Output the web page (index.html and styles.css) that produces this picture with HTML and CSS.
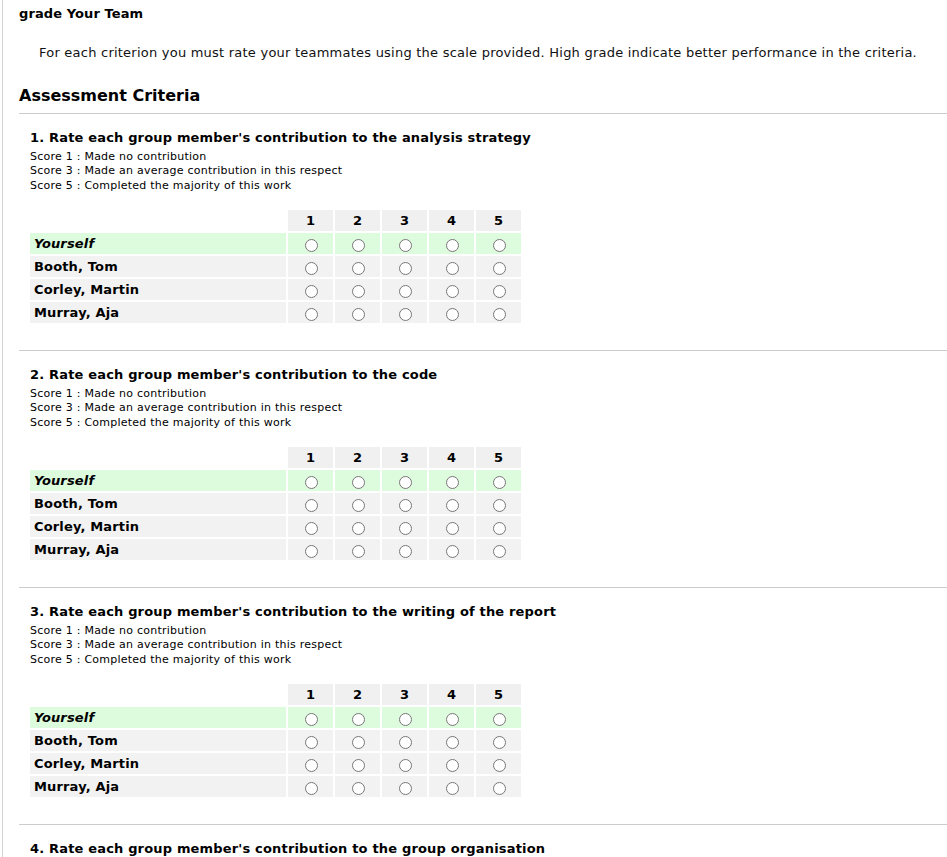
FILE: index.html
```html
<!DOCTYPE html>
<html lang="en">
<head>
<meta charset="utf-8">
<title>grade Your Team</title>
<link rel="stylesheet" href="styles.css">
</head>
<body>
<div class="page">
  <div class="page-title">grade Your Team</div>
  <p class="intro">For each criterion you must rate your teammates using the scale provided. High grade indicate better performance in the criteria.</p>
  <h2 class="section-heading">Assessment Criteria</h2>

  <div class="criterion">
    <div class="crit-title">1. Rate each group member's contribution to the analysis strategy</div>
    <div class="scores">
      <div>Score 1 : Made no contribution</div>
      <div>Score 3 : Made an average contribution in this respect</div>
      <div>Score 5 : Completed the majority of this work</div>
    </div>
    <table class="grid">
      <tr class="head"><td class="blank"></td><th>1</th><th>2</th><th>3</th><th>4</th><th>5</th></tr>
      <tr class="self"><td class="name"><i>Yourself</i></td><td><input type="radio" name="c1m0"></td><td><input type="radio" name="c1m0"></td><td><input type="radio" name="c1m0"></td><td><input type="radio" name="c1m0"></td><td><input type="radio" name="c1m0"></td></tr>
      <tr><td class="name">Booth, Tom</td><td><input type="radio" name="c1m1"></td><td><input type="radio" name="c1m1"></td><td><input type="radio" name="c1m1"></td><td><input type="radio" name="c1m1"></td><td><input type="radio" name="c1m1"></td></tr>
      <tr><td class="name">Corley, Martin</td><td><input type="radio" name="c1m2"></td><td><input type="radio" name="c1m2"></td><td><input type="radio" name="c1m2"></td><td><input type="radio" name="c1m2"></td><td><input type="radio" name="c1m2"></td></tr>
      <tr><td class="name">Murray, Aja</td><td><input type="radio" name="c1m3"></td><td><input type="radio" name="c1m3"></td><td><input type="radio" name="c1m3"></td><td><input type="radio" name="c1m3"></td><td><input type="radio" name="c1m3"></td></tr>
    </table>
  </div>

  <div class="criterion">
    <div class="crit-title">2. Rate each group member's contribution to the code</div>
    <div class="scores">
      <div>Score 1 : Made no contribution</div>
      <div>Score 3 : Made an average contribution in this respect</div>
      <div>Score 5 : Completed the majority of this work</div>
    </div>
    <table class="grid">
      <tr class="head"><td class="blank"></td><th>1</th><th>2</th><th>3</th><th>4</th><th>5</th></tr>
      <tr class="self"><td class="name"><i>Yourself</i></td><td><input type="radio" name="c2m0"></td><td><input type="radio" name="c2m0"></td><td><input type="radio" name="c2m0"></td><td><input type="radio" name="c2m0"></td><td><input type="radio" name="c2m0"></td></tr>
      <tr><td class="name">Booth, Tom</td><td><input type="radio" name="c2m1"></td><td><input type="radio" name="c2m1"></td><td><input type="radio" name="c2m1"></td><td><input type="radio" name="c2m1"></td><td><input type="radio" name="c2m1"></td></tr>
      <tr><td class="name">Corley, Martin</td><td><input type="radio" name="c2m2"></td><td><input type="radio" name="c2m2"></td><td><input type="radio" name="c2m2"></td><td><input type="radio" name="c2m2"></td><td><input type="radio" name="c2m2"></td></tr>
      <tr><td class="name">Murray, Aja</td><td><input type="radio" name="c2m3"></td><td><input type="radio" name="c2m3"></td><td><input type="radio" name="c2m3"></td><td><input type="radio" name="c2m3"></td><td><input type="radio" name="c2m3"></td></tr>
    </table>
  </div>

  <div class="criterion">
    <div class="crit-title">3. Rate each group member's contribution to the writing of the report</div>
    <div class="scores">
      <div>Score 1 : Made no contribution</div>
      <div>Score 3 : Made an average contribution in this respect</div>
      <div>Score 5 : Completed the majority of this work</div>
    </div>
    <table class="grid">
      <tr class="head"><td class="blank"></td><th>1</th><th>2</th><th>3</th><th>4</th><th>5</th></tr>
      <tr class="self"><td class="name"><i>Yourself</i></td><td><input type="radio" name="c3m0"></td><td><input type="radio" name="c3m0"></td><td><input type="radio" name="c3m0"></td><td><input type="radio" name="c3m0"></td><td><input type="radio" name="c3m0"></td></tr>
      <tr><td class="name">Booth, Tom</td><td><input type="radio" name="c3m1"></td><td><input type="radio" name="c3m1"></td><td><input type="radio" name="c3m1"></td><td><input type="radio" name="c3m1"></td><td><input type="radio" name="c3m1"></td></tr>
      <tr><td class="name">Corley, Martin</td><td><input type="radio" name="c3m2"></td><td><input type="radio" name="c3m2"></td><td><input type="radio" name="c3m2"></td><td><input type="radio" name="c3m2"></td><td><input type="radio" name="c3m2"></td></tr>
      <tr><td class="name">Murray, Aja</td><td><input type="radio" name="c3m3"></td><td><input type="radio" name="c3m3"></td><td><input type="radio" name="c3m3"></td><td><input type="radio" name="c3m3"></td><td><input type="radio" name="c3m3"></td></tr>
    </table>
  </div>

  <div class="criterion">
    <div class="crit-title">4. Rate each group member's contribution to the group organisation</div>
    <div class="scores">
      <div>Score 1 : Made no contribution</div>
      <div>Score 3 : Made an average contribution in this respect</div>
      <div>Score 5 : Completed the majority of this work</div>
    </div>
  </div>
</div>
</body>
</html>
```

FILE: styles.css
```css
html, body {
  margin: 0;
  padding: 0;
  background: #ffffff;
}
body {
  font-family: "DejaVu Sans", Verdana, sans-serif;
  color: #000;
  overflow: hidden;
}
.page {
  margin-left: 2px;
  border-left: 1px solid #d4d4d4;
  padding-left: 16px;
  min-height: 900px;
}
.page-title {
  font-size: 13px;
  font-weight: bold;
  line-height: 16px;
  padding-top: 6px;
  letter-spacing: 0.1px;
}
.intro {
  margin: 23px 0 0 0;
  padding-left: 20px;
  font-size: 13px;
  line-height: 16px;
  color: #111;
  letter-spacing: 0.23px;
}
.section-heading {
  margin: 25px 0 0 0;
  font-size: 16px;
  font-weight: bold;
  line-height: 20px;
  padding-bottom: 7px;
  border-bottom: 1px solid #cccccc;
}
.criterion {
  padding: 16px 0 25px 11px;
  border-bottom: 1px solid #cccccc;
}
.crit-title {
  font-size: 13px;
  font-weight: bold;
  line-height: 16px;
  letter-spacing: 0.17px;
}
.scores {
  margin-top: 3.5px;
  font-size: 11px;
  line-height: 14.5px;
  letter-spacing: 0.24px;
}
.grid {
  margin: 15px 0 0 -2px;
  border-collapse: separate;
  border-spacing: 2px;
  font-size: 13px;
}
.grid td, .grid th {
  height: 21px;
  padding: 0;
  text-align: center;
  vertical-align: middle;
  width: 45px;
  background: #f2f2f2;
}
.grid th {
  font-weight: bold;
  background: #f0f0f0;
}
.grid td.blank {
  background: transparent;
}
.grid td.name {
  width: 252px;
  padding-left: 4px;
  text-align: left;
  font-weight: bold;
  letter-spacing: 0.15px;
}
.grid tr.self td {
  background: #ddfcdd;
}
.grid input[type="radio"] {
  margin: 2px 0 0 2px;
  vertical-align: middle;
}
```
